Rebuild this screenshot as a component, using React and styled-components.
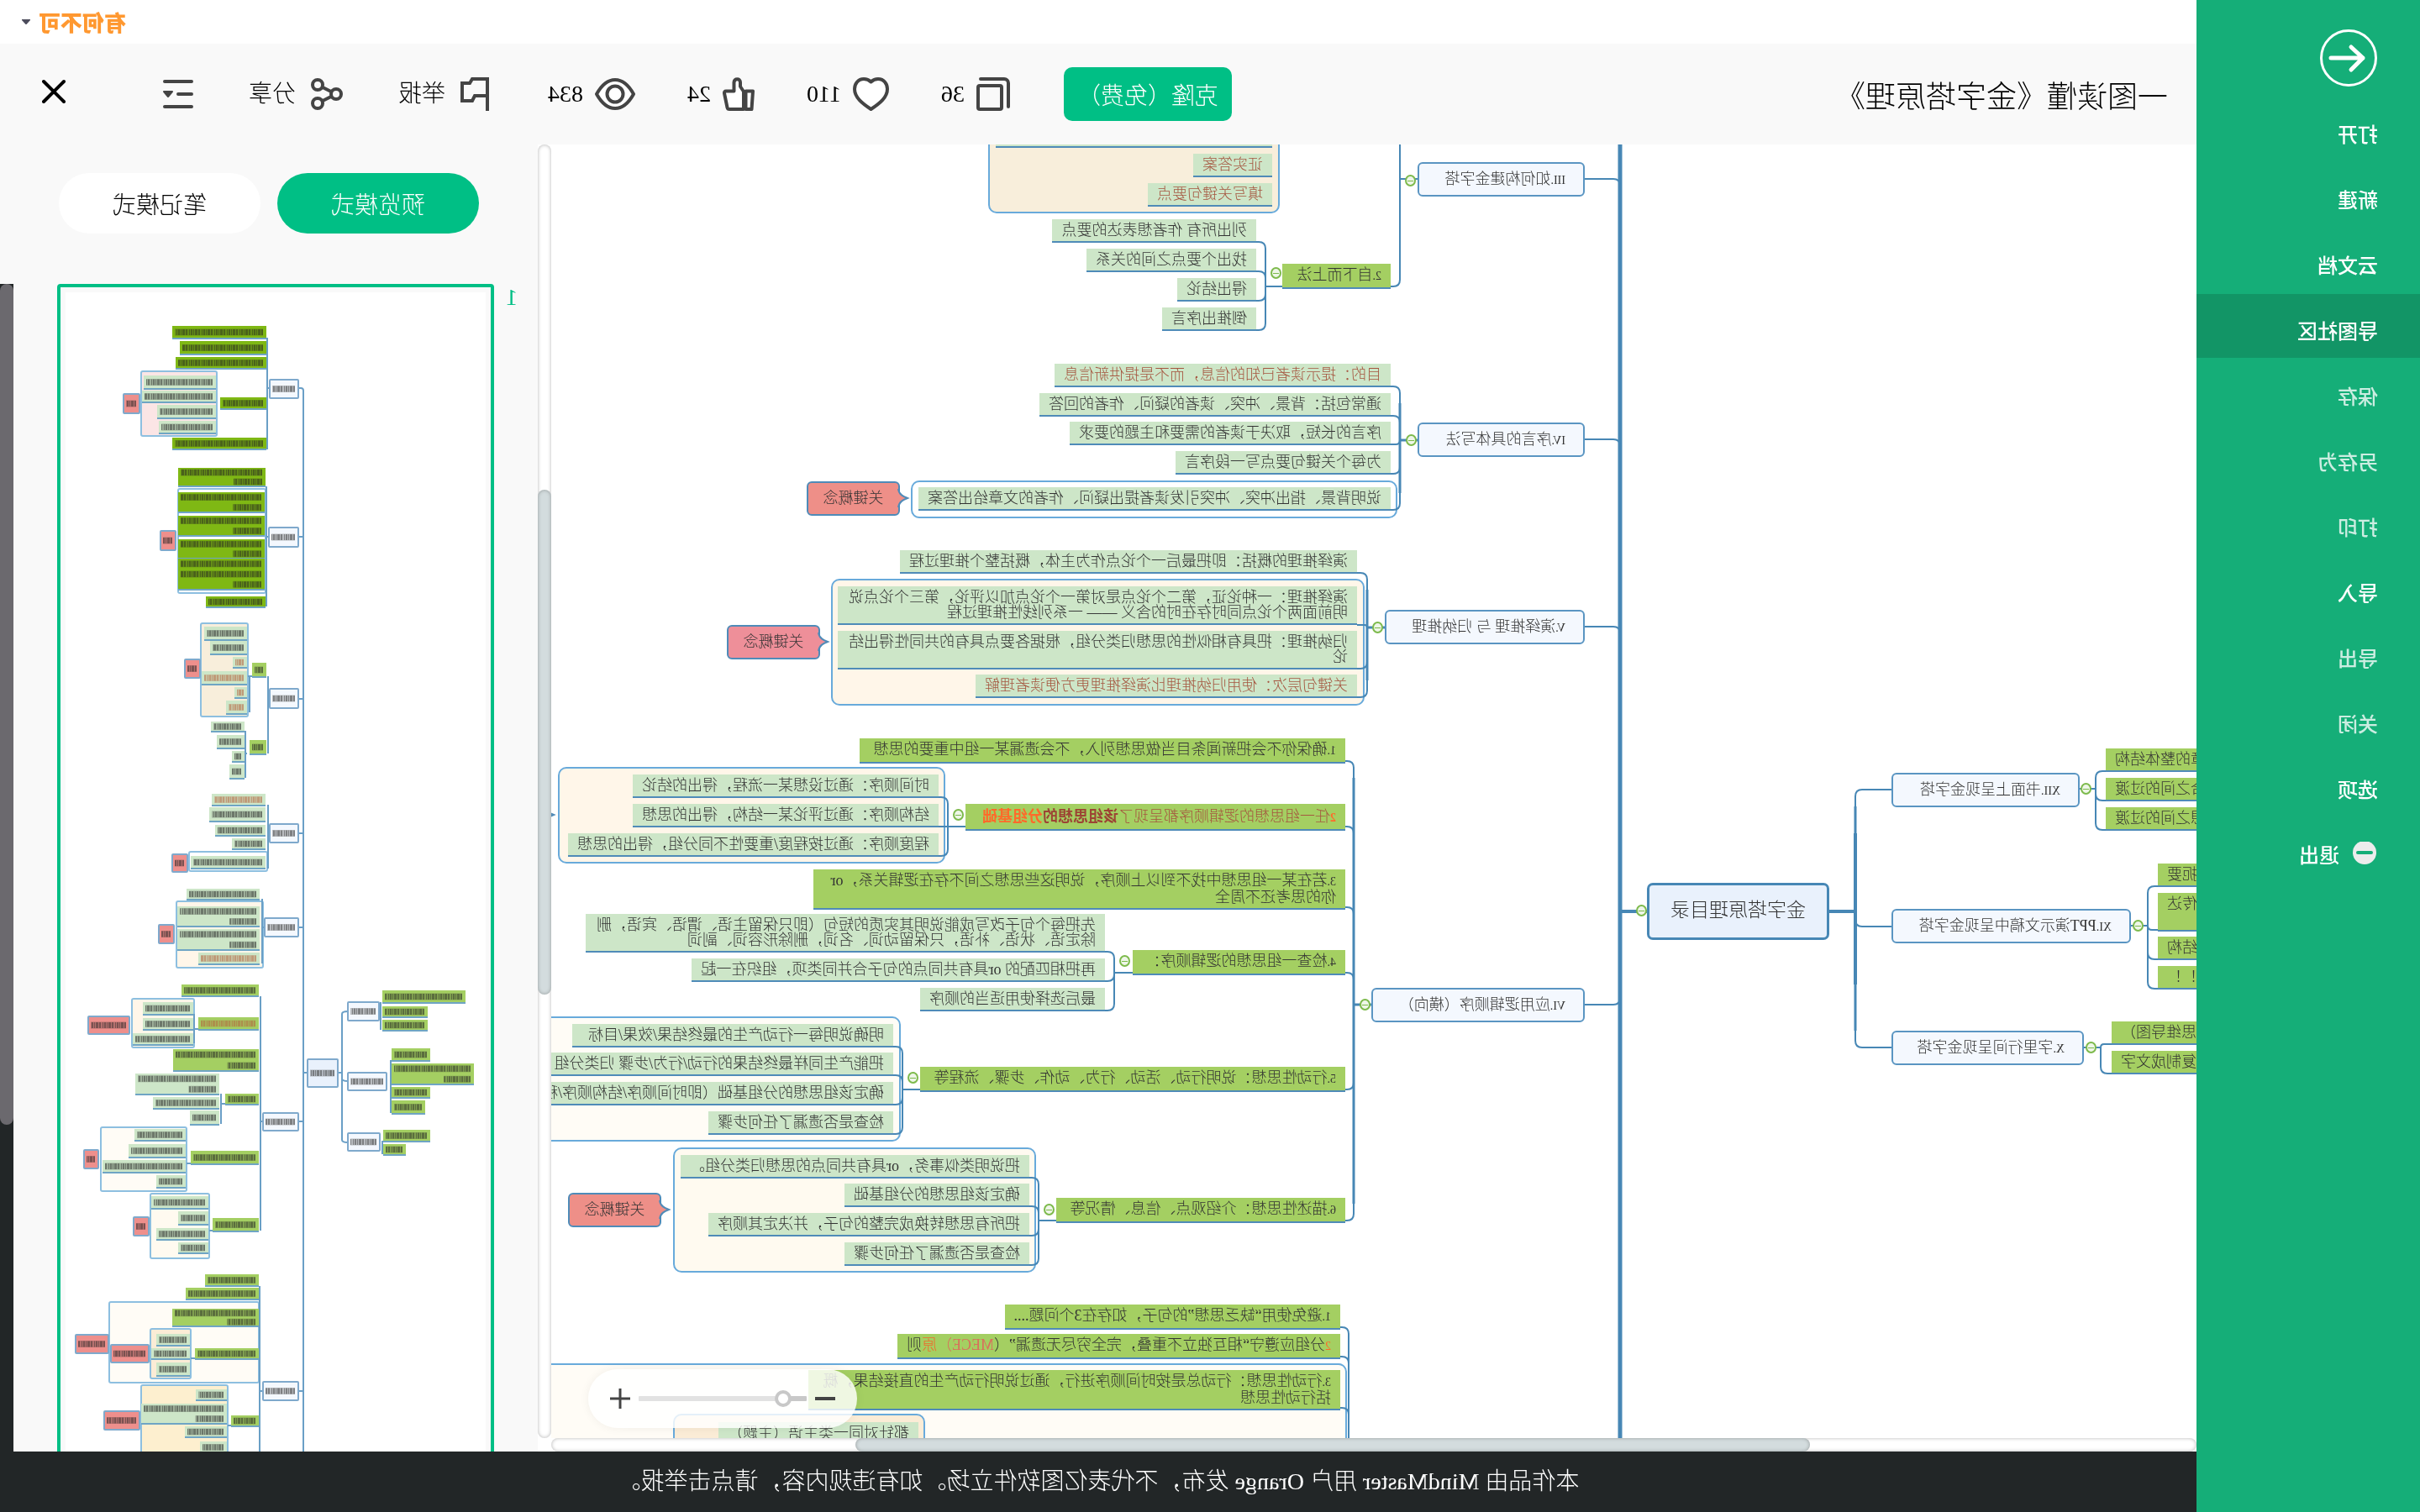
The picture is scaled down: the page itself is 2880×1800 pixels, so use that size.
import React, { useState } from 'react';
import styled, { createGlobalStyle } from 'styled-components';

const GlobalStyle = createGlobalStyle`
  * { box-sizing: border-box; }
  body {
    margin: 0;
    overflow: hidden;
    background: #fff;
    font-family: "Liberation Serif", "Noto Sans CJK SC Light", "Noto Sans CJK SC", serif;
    font-size: 28px;
    text-spacing-trim: space-all;
    color: #000;
  }
  button, input {
    font: inherit;
    color: inherit;
    margin: 0;
    padding: 0;
    border: 0;
    background: none;
  }
`;

/* the whole window is shown as its mirror image */
const Window = styled.div`
  display: flex;
  height: 100vh;
  transform: scaleX(-1);
`;

const Sidebar = styled.nav`
  flex: none;
  width: 266px;
  background: #15ae78;
  color: #fff;
  font-family: "Noto Sans CJK SC", sans-serif;
  font-size: 24px;
  font-weight: 500;
`;

const BackButton = styled.button`
  display: block;
  margin: 35px 0 13px 51px;
  height: 68px;
`;

const Menu = styled.div`
  display: flex;
  flex-direction: column;
  gap: 2px;
`;

const MenuItem = styled.a`
  display: flex;
  align-items: center;
  gap: 16px;
  height: 76px;
  padding: 9px 0 0 50px;
  color: ${props => (props.$dim ? 'rgba(255, 255, 255, .78)' : '#fff')};
  background: ${props => (props.$active ? '#129566' : 'none')};
  text-decoration: none;
  line-height: 36px;
`;

const Main = styled.main`
  flex: 1;
  min-width: 0;
  display: flex;
  flex-direction: column;
`;

const TopBar = styled.div`
  flex: none;
  display: flex;
  justify-content: flex-end;
  align-items: center;
  height: 52px;
  padding-right: 26px;
`;

const UserButton = styled.button`
  display: flex;
  align-items: center;
  gap: 10px;
  color: #ff9830;
  font-family: "Noto Sans CJK SC", sans-serif;
  font-size: 26px;
  font-weight: 900;
  line-height: 36px;
`;

const Header = styled.header`
  flex: none;
  display: flex;
  align-items: center;
  height: 120px;
  padding: 0 50px 0 34px;
  background: #f9f9f9;
`;

const Title = styled.h1`
  flex: 1;
  margin: 0;
  font-size: 36px;
  font-weight: 400;
  white-space: nowrap;
`;

const CloneButton = styled.button`
  width: 200px;
  height: 64px;
  margin-right: 64px;
  border-radius: 10px;
  background: #00bf85;
  color: #fff;
  white-space: nowrap;
`;

const Stats = styled.div`
  display: flex;
  align-items: center;
  gap: 62px;
  margin-right: 70px;
`;

const Actions = styled.div`
  display: flex;
  align-items: center;
  gap: 66px;
`;

const IconButton = styled.button`
  display: flex;
  align-items: center;
  gap: ${props => props.$gap || 14}px;
  margin-left: ${props => props.$push || 0}px;
  line-height: 40px;
`;

const Body = styled.div`
  flex: 1;
  min-height: 0;
  display: flex;
`;

const Viewer = styled.section`
  flex: 1;
  min-width: 0;
  display: grid;
  grid-template-columns: 1fr 16px;
  grid-template-rows: 1fr 16px;
`;

const Canvas = styled.div`
  position: relative;
  overflow: hidden;
  font-size: 18px;
  line-height: 18px;
  color: #333;
`;

const Links = styled.svg`
  position: absolute;
  left: 0;
  top: 0;
  fill: none;
  stroke: #4787b5;
`;

const Track = styled.div`
  display: flex;
  flex-direction: ${props => (props.$row ? 'row' : 'column')};
  background: #fff;
  border-radius: 8px;
  box-shadow: inset 0 0 4px rgba(0, 0, 0, .3);
`;

const Thumb = styled.div`
  flex: none;
  width: ${props => (props.$row ? '58%' : 'auto')};
  height: ${props => (props.$row ? 'auto' : '39%')};
  margin-left: ${props => (props.$row ? '23.5%' : '0')};
  border-radius: 8px;
  background: #d3dcde;
  box-shadow: inset 0 0 4px rgba(0, 0, 0, .3);
`;

const VThumbSpace = styled.div`
  flex: none;
  height: 26.7%;
`;

const Leaf = styled.div`
  position: absolute;
  left: ${props => props.$x}px;
  top: ${props => props.$y}px;
  width: ${props => (props.$w ? `${props.$w}px` : 'max-content')};
  min-height: 28px;
  padding: 4px 11px;
  border-bottom: 2px solid #4f8bb8;
  background: ${props => (props.$green ? '#a4cf62' : '#cde6c8')};
  color: ${props => (props.$red ? '#a5553f' : '#333')};
  text-align: ${props => (props.$end ? 'right' : 'left')};
`;

const Small = styled.span`
  font-size: 14px;
`;

const Mark = styled.span`
  color: ${props => props.$color};
  font-weight: ${props => (props.$bold ? 700 : 'inherit')};
`;

const Strong = styled(Mark)`
  font-family: "Noto Sans CJK SC", sans-serif;
  font-weight: 700;
`;

const Branch = styled.div`
  position: absolute;
  left: ${props => props.$x}px;
  top: ${props => props.$y}px;
  width: ${props => props.$w}px;
  height: 41px;
  padding: 9px 0 0 21px;
  border: 2px solid #5a95c2;
  border-radius: 6px;
  background: #f4f8fe;
  white-space: nowrap;
`;

const Root = styled.div`
  position: absolute;
  left: 437px;
  top: 879px;
  width: 217px;
  height: 68px;
  border: 3px solid #4787b5;
  border-radius: 7px;
  background: #e9f1fc;
  font-size: 23px;
  line-height: 60px;
  text-align: center;
`;

const Boundary = styled.div`
  position: absolute;
  left: ${props => props.$x}px;
  top: ${props => props.$y}px;
  width: ${props => props.$w}px;
  height: ${props => props.$h}px;
  border: 2px solid #68aadb;
  border-radius: 10px;
  background: ${props => props.$fill};
`;

const CalloutBox = styled.div`
  position: absolute;
  left: ${props => props.$x}px;
  top: ${props => props.$y}px;
  width: 111px;
  height: 41px;
  padding-top: 9px;
  border: 2px solid #4f8bb8;
  border-radius: 6px;
  background: ${props => props.$fill};
  text-align: center;

  svg {
    position: absolute;
    left: -14px;
    top: 6px;
  }
`;

const Toggle = styled.button`
  position: absolute;
  left: ${props => props.$x - 7}px;
  top: ${props => props.$y - 7}px;
  width: 13px;
  height: 14px;
  border: 2px solid #7dba4c;
  border-radius: 50%;
  background: linear-gradient(#7dba4c, #7dba4c) center / 7px 1px no-repeat #eef6e8;
`;

const ZoomBar = styled.div`
  position: absolute;
  right: 44px;
  bottom: 12px;
  display: flex;
  align-items: center;
  justify-content: center;
  gap: 10px;
  width: 320px;
  height: 70px;
  border-radius: 35px;
  background: rgba(255, 255, 255, .82);
  box-shadow: 0 0 12px rgba(0, 0, 0, .06);

  button {
    display: flex;
  }
`;

const Range = styled.input`
  appearance: none;
  width: 200px;
  height: 6px;
  border-radius: 1px;
  background: linear-gradient(to right, #c8c8c8 14%, #e2e2e2 14%);

  &::-webkit-slider-thumb {
    appearance: none;
    width: 20px;
    height: 20px;
    border: 4px solid #c8c8c8;
    border-radius: 50%;
    background: #fff;
  }
`;

const Panel = styled.aside`
  flex: none;
  display: flex;
  flex-direction: column;
  width: 640px;
  background: #f9f9f9;
`;

const Modes = styled.div`
  display: flex;
  gap: 20px;
  padding: 34px 70px 60px;
`;

const ModeButton = styled.button`
  flex: 1;
  height: 72px;
  border-radius: 36px;
  background: ${props => (props.$on ? '#00bf85' : '#fff')};
  color: ${props => (props.$on ? '#fff' : '#000')};
`;

const Pages = styled.div`
  flex: 1;
  min-height: 0;
  display: flex;
  overflow: hidden;
`;

const PageNumber = styled.div`
  width: 52px;
  padding-right: 14px;
  color: #00bf85;
  text-align: right;
`;

const PageFrame = styled.div`
  flex: 1;
  align-self: flex-start;
  padding: 6px;
  border: 4px solid #00bf85;
  border-radius: 4px;

  svg {
    display: block;
    width: 100%;
    background: #fff;
  }
`;

const PanelTrack = styled.div`
  width: 16px;
  margin-left: 52px;
  background: #222627;
`;

const PanelThumb = styled.div`
  height: 72%;
  border-radius: 8px;
  background: #6b696e;
`;

const Footer = styled.footer`
  flex: none;
  height: 72px;
  background: #222627;
  color: #fff;
  line-height: 72px;
  text-align: center;
  white-space: nowrap;
`;

const MENU = [
  { text: '打开' },
  { text: '新建' },
  { text: '云文档' },
  { text: '导图社区', active: true },
  { text: '保存', dim: true },
  { text: '另存为', dim: true },
  { text: '打印', dim: true },
  { text: '导入' },
  { text: '导出', dim: true },
  { text: '关闭', dim: true },
  { text: '选项' },
];

const BRANCHES = [
  { x: 728, y: 21, w: 199, no: 'III.', text: '如何构建金字塔' },
  { x: 728, y: 331, w: 199, no: 'IV.', text: '序言的具体写法' },
  { x: 728, y: 554, w: 238, no: 'V.', text: '演绎推理 与 归纳推理' },
  { x: 728, y: 1004, w: 254, no: 'VI.', text: '应用逻辑顺序（横向）' },
  { x: 139, y: 748, w: 224, no: 'XII.', text: '书面上呈现金字塔' },
  { x: 78, y: 910, w: 285, no: 'XI.', text: 'PPT演示文稿中呈现金字塔' },
  { x: 134, y: 1055, w: 229, no: 'X.', text: '字里行间呈现金字塔' },
];

const LEAVES = [
  { x: 1100, y: -24, w: 329, text: '' },
  { x: 1100, y: 11, text: '证实答案', red: true },
  { x: 1100, y: 46, text: '填写关键句要点', red: true },
  { x: 959, y: 142, w: 129, no: '2.', text: '自下而上法', green: true },
  { x: 1119, y: 89, text: '列出所有 作者想表达的要点' },
  { x: 1119, y: 124, text: '找出个要点之间的关系' },
  { x: 1119, y: 159, text: '得出结论' },
  { x: 1119, y: 194, text: '倒推出序言' },

  { x: 959, y: 261, text: '目的：提示读者已知的信息，而不是提供新信息', red: true },
  { x: 959, y: 296, text: '通常包括：背景、冲突、读者的疑问、作者的回答' },
  { x: 959, y: 330, text: '序言的长短，取决于读者的需要和主题的要求' },
  { x: 959, y: 365, text: '为每个关键句要点写一段序言' },
  { x: 959, y: 408, text: '说明背景、指出冲突、冲突引发读者提出疑问、作者的文章给出答案' },

  { x: 999, y: 483, text: '演绎推理的概括：即把最后一个论点作为主体，概括整个推理过程' },
  { x: 999, y: 526, w: 618, text: '演绎推理：一种论证，第二个论点是对第一个论点加以评论，第三个论点说明前面两个论点同时存在时的含义 —— 一系列线性推理过程' },
  { x: 999, y: 579, w: 618, text: '归纳推理：把具有相似性的思想归类分组，根据各要点具有的共同性得出结论' },
  { x: 999, y: 631, text: '关键句层次：使用归纳推理比演绎推理更方便读者理解', red: true },

  { x: 1013, y: 707, w: 578, no: '1.', text: '确保你不会把新闻条目当做思想列入，不会遗漏某一组中重要的思想', green: true },
  {
    x: 1013,
    y: 785,
    w: 452,
    green: true,
    red: true,
    text: (
      <>
        <Small><Mark $color="#ff6a2a" $bold>2</Mark></Small>
        任一组思想的逻辑顺序都呈现了
        <Strong $color="#9c4434">该组思想的</Strong>
        <Strong $color="#ff6a2a">分组基础</Strong>
      </>
    ),
  },
  { x: 1497, y: 750, text: '时间顺序：通过设想某一流程，得出的结论' },
  { x: 1497, y: 785, text: '结构顺序：通过评论某一结构，得出的思想' },
  { x: 1497, y: 820, text: '程度顺序：通过按程度/重要性不同分组，得出的思想' },
  { x: 1013, y: 863, w: 633, no: '3.', text: '若在某一组思想中找不到以上顺序，说明这些思想之间不存在逻辑关系，or 你的思考还不周全', green: true },
  { x: 1013, y: 959, w: 253, no: '4.', text: '检查一组思想的逻辑顺序：', green: true },
  { x: 1299, y: 916, w: 618, text: '先把每个句子改写成能说明其实质的短句（即只保留主语、谓语、宾语，删除定语、状语、补语，只保留动词、名词，删除形容词、副词' },
  { x: 1299, y: 969, text: '再把相匹配的 or具有共同点的句子合并同类项，组织在一起' },
  { x: 1299, y: 1004, text: '最后选择使用适当的顺序' },
  { x: 1013, y: 1098, w: 506, no: '5.', text: '行动性思想：说明行动、活动、行为、动作、步骤、流程等', green: true },
  { x: 1551, y: 1047, w: 382, text: '明确说明每一行动产生的最终结果/效果/目标' },
  { x: 1551, y: 1081, text: '把能产生同样最终结果的行动/行为/步骤 归类分组' },
  { x: 1551, y: 1116, text: '确定该组思想的分组基础（即时间顺序/结构顺序/程度顺序）' },
  { x: 1551, y: 1151, text: '检查是否遗漏了任何步骤' },
  { x: 1013, y: 1254, w: 344, no: '6.', text: '描述性思想：介绍观点、信息、情况等', green: true },
  { x: 1389, y: 1203, text: '把说明类似事务，or具有共同点的思想归类分组。' },
  { x: 1389, y: 1237, text: '确定该组思想的分组基础' },
  { x: 1389, y: 1272, text: '把所有思想转换成完整的句子，并决定其顺序' },
  { x: 1389, y: 1307, text: '检查是否遗漏了任何步骤' },

  { x: 1019, y: 1381, no: '1.', text: '避免使用“缺乏思想”的句子，如存在3个问题....', green: true },
  {
    x: 1019,
    y: 1416,
    green: true,
    text: (
      <>
        <Small><Mark $color="#ff6a2a">2</Mark></Small>
        分组应遵守“相互独立不重叠，完全穷尽无遗漏”（
        <Mark $color="#d9705c">MECE）</Mark>
        <Mark $color="#f0682c">原</Mark>
        则
      </>
    ),
  },
  { x: 1019, y: 1459, w: 633, no: '3.', text: '行动性思想：行动总是按时间顺序进行，通过说明行动产生的直接结果，概括行动性思想', green: true },
  { x: 1521, y: 1521, text: '都针对同一类主语（主题）' },

  { x: -78, y: 719, w: 186, end: true, green: true, text: '呈现文章的整体结构' },
  { x: -78, y: 754, w: 186, end: true, green: true, text: '各个组合之间的过渡' },
  { x: -78, y: 789, w: 186, end: true, green: true, text: '各组思想之间的过渡' },
  { x: -78, y: 856, w: 124, end: true, green: true, text: '简明扼要' },
  { x: -78, y: 891, w: 124, end: true, green: true, text: <>只供传达<br />&nbsp;</> },
  { x: -78, y: 943, w: 124, end: true, green: true, text: '金字塔结构' },
  { x: -78, y: 978, w: 124, end: true, green: true, text: '练习！！' },
  { x: -78, y: 1044, w: 179, end: true, green: true, text: '（思维导图）' },
  { x: -78, y: 1079, w: 179, end: true, green: true, text: '然后复制成文字' },
];

const BOUNDARIES = [
  { x: 1091, y: -120, w: 347, h: 202, fill: '#f8eedb' },
  { x: 951, y: 400, w: 579, h: 45, fill: '#fff' },
  { x: 990, y: 517, w: 635, h: 151, fill: '#fff6e9' },
  { x: 1489, y: 741, w: 461, h: 115, fill: '#fff6e9' },
  { x: 1542, y: 1038, w: 600, h: 149, fill: '#fffcf6' },
  { x: 1381, y: 1194, w: 432, h: 149, fill: '#fffaf0' },
  { x: 1011, y: 1451, w: 1100, h: 300, fill: '#fffcf6' },
  { x: 1513, y: 1511, w: 300, h: 150, fill: '#fbecd6' },
];

const CALLOUTS = [
  { x: 1543, y: 401, fill: '#ee8f88' },
  { x: 1638, y: 572, fill: '#ee8f99' },
  { x: 1964, y: 778, fill: '#ee8f99' },
  { x: 1827, y: 1248, fill: '#ee8f88' },
];

const TOGGLES = [
  [936, 43], [1096, 153], [935, 352], [975, 575], [990, 1024], [1474, 798], [1276, 972],
  [1528, 1111], [1366, 1268], [661, 912], [132, 767], [70, 930], [126, 1075],
];

// x: vertical line, from: where the parent joins it, ys: the children
const LINKS = [
  { x: 686, from: 912, to: 728, ys: [41, 351, 574, 1024], w: 2 },
  { x: 406, from: 913, to: 363, ys: [768, 931, 1075], w: 3 },
  { x: 120, from: 767, to: 108, ys: [746, 781, 816], start: 139 },
  { x: 58, from: 930, to: 46, ys: [883, 935, 970, 1005], start: 78 },
  { x: 114, from: 1075, to: 101, ys: [1071, 1106], start: 134 },
  { x: 948, from: 41, to: 959, ys: [-40, 169], start: 927 },
  { x: 1108, from: 169, to: 1119, ys: [116, 151, 186, 221], start: 1088 },
  { x: 948, from: 352, to: 959, ys: [288, 323, 357, 392, 435], start: 927, w: 3 },
  { x: 987, from: 575, to: 999, ys: [510, 572, 624, 658], start: 966, w: 3 },
  { x: 1003, from: 1024, to: 1013, ys: [734, 812, 908, 986, 1125, 1281], start: 982, w: 3 },
  { x: 1486, from: 812, to: 1497, ys: [777, 812, 847], start: 1465 },
  { x: 1288, from: 986, to: 1299, ys: [961, 996, 1031], start: 1266 },
  { x: 1540, from: 1125, to: 1551, ys: [1074, 1108, 1143, 1178], start: 1519 },
  { x: 1378, from: 1281, to: 1389, ys: [1230, 1264, 1299, 1334], start: 1357 },
  { x: 1009, from: 1600, to: 1019, ys: [1408, 1443, 1504] },
];

const elbow = (x, from, y, to) => {
  const r = Math.min(8, Math.abs(y - from));
  const down = y > from ? 1 : -1;
  const side = to > x ? 1 : -1;
  return `M${x} ${from}V${y - (down * r)}Q${x} ${y} ${x + (side * r)} ${y}H${to}`;
};

/* page preview: kind, x, y, width, height, lines of text */
const PREVIEW = [
  ['o', 320, 94, 90, 77, '#fbe5e5'],
  ['o', 262, 234, 104, 124, '#fff'],
  ['o', 283, 394, 56, 111, '#f8eedb'],
  ['o', 260, 666, 93, 23, '#fff'],
  ['o', 265, 725, 103, 79, '#fff6e9'],
  ['o', 347, 841, 74, 58, '#fff6e9'],
  ['o', 356, 994, 102, 76, '#fffcf6'],
  ['o', 329, 1073, 70, 77, '#fffaf0'],
  ['o', 270, 1202, 178, 96, '#fffcf6'],
  ['o', 351, 1234, 48, 59, '#fbecd6'],
  ['o', 307, 1301, 103, 100, '#fdefcf'],
  ['d', 261, 40, 112, 15], ['d', 261, 58, 103, 16], ['d', 261, 77, 108, 14],
  ['d', 261, 125, 55, 14], ['d', 261, 173, 112, 14],
  ['p', 321, 99, 86, 16], ['p', 321, 117, 88, 14], ['p', 321, 134, 70, 16], ['p', 321, 153, 68, 15],
  ['d', 262, 209, 104, 22, 2], ['d', 263, 238, 103, 24, 2], ['d', 263, 266, 103, 24, 2],
  ['d', 263, 294, 103, 23, 2], ['d', 263, 317, 103, 37, 3], ['d', 262, 362, 71, 13],
  ['g', 261, 441, 17, 17], ['g', 261, 533, 20, 17],
  ['p', 284, 398, 51, 16], ['p', 284, 415, 44, 16], ['r', 284, 434, 17, 13],
  ['r', 284, 451, 54, 16], ['r', 284, 470, 15, 13], ['r', 284, 486, 25, 16],
  ['p', 287, 511, 40, 12], ['p', 287, 527, 33, 16], ['p', 287, 546, 15, 13], ['p', 287, 562, 18, 17],
  ['r', 262, 597, 64, 14], ['p', 262, 613, 67, 17], ['p', 262, 634, 60, 13],
  ['p', 262, 650, 40, 13], ['p', 262, 671, 89, 15],
  ['p', 269, 710, 87, 13], ['p', 269, 731, 98, 24, 2], ['p', 269, 758, 98, 25, 2], ['r', 269, 786, 73, 14],
  ['g', 270, 824, 92, 14], ['gr', 270, 863, 72, 15], ['g', 270, 901, 102, 26, 2],
  ['g', 270, 954, 40, 13], ['g', 270, 1022, 81, 16], ['g', 270, 1102, 55, 16],
  ['p', 348, 845, 60, 15], ['p', 348, 864, 60, 14], ['p', 348, 882, 72, 14],
  ['p', 317, 930, 100, 25, 2], ['p', 317, 958, 79, 14], ['p', 317, 974, 35, 17],
  ['p', 357, 996, 61, 14], ['p', 357, 1014, 68, 16], ['p', 357, 1033, 99, 15], ['p', 357, 1051, 35, 15],
  ['p', 330, 1076, 68, 15], ['p', 330, 1094, 36, 16], ['p', 330, 1114, 62, 14], ['p', 330, 1131, 36, 13],
  ['g', 270, 1169, 64, 14], ['g', 270, 1185, 87, 14], ['g', 270, 1210, 103, 21, 2], ['g', 270, 1257, 76, 13],
  ['p', 352, 1240, 40, 14], ['p', 352, 1257, 46, 13], ['p', 352, 1274, 40, 16],
  ['g', 270, 1337, 33, 13],
  ['p', 308, 1306, 37, 13], ['p', 308, 1323, 102, 24, 2], ['p', 308, 1350, 50, 13], ['p', 308, 1368, 32, 14],
  ['g', 24, 831, 99, 15], ['g', 69, 850, 54, 13], ['g', 69, 866, 54, 13],
  ['g', 66, 900, 46, 15], ['g', 14, 918, 98, 25, 2], ['g', 66, 946, 46, 13], ['g', 72, 962, 40, 16],
  ['g', 66, 997, 56, 14], ['g', 95, 1014, 27, 13],
  ['c', 412, 121, 19, 23], ['c', 369, 284, 18, 23], ['c', 340, 437, 18, 22], ['c', 355, 669, 18, 21],
  ['c', 371, 753, 18, 22], ['c', 424, 862, 49, 21], ['c', 461, 1021, 17, 22], ['c', 401, 1101, 18, 22],
  ['c', 401, 1253, 45, 21], ['c', 449, 1241, 39, 22], ['c', 412, 1332, 42, 22],
  ['b', 223, 104, 34, 22], ['b', 223, 280, 35, 23], ['b', 223, 472, 34, 23], ['b', 223, 633, 34, 22],
  ['b', 223, 745, 40, 22], ['b', 223, 977, 42, 21], ['b', 223, 1297, 42, 22],
  ['b', 127, 845, 37, 22], ['b', 118, 929, 46, 21], ['b', 126, 1001, 38, 21],
  ['t', 176, 913, 36, 33],
];

const PREVIEW_FILL = {
  d: '#7fb814', g: '#a4cf62', gr: '#a4cf62', p: '#cde6c8', r: '#cde6c8', c: '#ee8f8c', b: '#f4f8fe', t: '#e9f1fc',
};

const PREVIEW_LINKS = [
  'M223 114H220Q217 114 217 117V1390M217 291H223M217 484H223M217 644H223M217 756H223M217 987H223M217 1308H223',
  'M260 54V187M257 114H260M261 231V374M258 291H261M259 457V549M257 484H259M281 457V500M284 549H286V578M286 549V522',
  'M259 610V686M257 644H259M266 722V799M263 756H266M268 838V1117M265 987H268M342 877H347V894M347 877V859',
  'M310 966H315V990M315 966V954M351 1037H356M325 1117H329M269 1183V1390M265 1308H269M346 1269H351M303 1349H307',
  'M176 929H171M171 929V859Q171 856 164 856M171 929V936Q171 939 164 939M171 929V1009Q171 1012 164 1012',
  'M125 845V878M113 914V977M123 1010V1026M212 929H217M278 457H283',
];

function PreviewBox({ box }) {
  const [kind, x, y, w, h, extra] = box;
  if (kind === 'o') {
    return <rect x={x} y={y} width={w} height={h} rx="2" fill={extra} stroke="#8dbfe0" strokeWidth="2" />;
  }
  const lines = extra || 1;
  const framed = kind === 'c' || kind === 'b' || kind === 't';
  const ink = kind === 'r' || kind === 'gr' ? '#b5603c' : '#222';
  return (
    <g>
      <rect
        x={x}
        y={y}
        width={w}
        height={h}
        fill={PREVIEW_FILL[kind]}
        stroke={framed ? '#7fa9cc' : 'none'}
        strokeWidth="2"
        rx={framed ? 1 : 0}
      />
      {!framed && <path d={`M${x} ${y + h}h${w}`} stroke="#6fa5c4" strokeWidth="2" />}
      {Array.from({ length: lines }, (_, i) => {
        const last = i > 0 && i === lines - 1;
        const ty = y + (h * (i + 0.5)) / lines;
        const tw = (w - 7) * (last ? 0.35 : 1);
        return (
          <g key={i} stroke={ink}>
            <path d={`M${x + 4} ${ty}h${tw}`} strokeOpacity=".28" strokeWidth="8" />
            <path
              d={`M${x + 4} ${ty}h${tw}`}
              strokeOpacity=".4"
              strokeWidth="7"
              strokeDasharray="2 1 3 1 1 1 2 1 1 2"
            />
          </g>
        );
      })}
    </g>
  );
}

const Preview = () => (
  <svg viewBox="0 0 500 1380" fill="none">
    {PREVIEW.filter(box => box[0] === 'o').map(box => <PreviewBox key={box.join()} box={box} />)}
    <g stroke="#6a9fc6" strokeWidth="2">
      {PREVIEW_LINKS.map(d => <path key={d} d={d} />)}
    </g>
    {PREVIEW.filter(box => box[0] !== 'o').map(box => <PreviewBox key={box.join()} box={box} />)}
  </svg>
);

const Icon = ({ w, h, children, stroke = '#444', width = 4 }) => (
  <svg
    width={w}
    height={h}
    viewBox={`0 0 ${w} ${h}`}
    fill="none"
    stroke={stroke}
    strokeWidth={width}
    strokeLinecap="round"
    strokeLinejoin="round"
    aria-hidden="true"
  >
    {children}
  </svg>
);

const STATS = [
  {
    label: '克隆数',
    value: 36,
    icon: (
      <Icon w={40} h={40}>
        <path d="M2 35V7a5 5 0 0 1 5-5h28" />
        <rect x="10" y="10" width="28" height="28" rx="2" />
      </Icon>
    ),
  },
  {
    label: '收藏',
    value: 110,
    icon: (
      <Icon w={43} h={40}>
        <path fill="#fff" d="M21.500 5.500C18 2 15 2 13 2 6 2 2 8 2 14c0 10 9 17 19.500 24C32 31 41 24 41 14 41 8 37 2 30 2c-2 0-5 0-8.500 3.500z" />
      </Icon>
    ),
  },
  {
    label: '点赞',
    value: 24,
    icon: (
      <Icon w={38} h={40}>
        <path fill="#fff" d="M2 16.500h8.500V38H3.500z" />
        <path fill="#fff" d="M13 38V17l4-6V6c0-5 7-5 7.500 0V16.500H34c1.500 0 2.200 1 2 2.500l-3.500 17c-.3 1.300-1 2-2.500 2z" />
      </Icon>
    ),
  },
  {
    label: '浏览',
    value: 834,
    icon: (
      <Icon w={48} h={38}>
        <path fill="#fff" d="M2 19C7 10 14 2 24 2s17 8 22 17c-5 9-12 17-22 17S7 28 2 19z" />
        <circle cx="24" cy="19" r="9.500" />
      </Icon>
    ),
  },
];

const Callout = ({ x, y, fill }) => (
  <CalloutBox $x={x} $y={y} $fill={fill}>
    <svg width="16" height="24" viewBox="0 0 16 24">
      <path d="M14 1c-1 7-6 9-11 11 5 2 10 4 11 11" fill={fill} stroke="#4f8bb8" strokeWidth="2" />
    </svg>
    关键概念
  </CalloutBox>
);

function MindMap() {
  const [zoom, setZoom] = useState(10);

  return (
    <Canvas>
      {BOUNDARIES.map(({ x, y, w, h, fill }) => (
        <Boundary key={`${x}-${y}`} $x={x} $y={y} $w={w} $h={h} $fill={fill} />
      ))}
      <Links width="1958" height="1540">
        <path d="M686 0V1540" strokeWidth="5" />
        <path d="M437 913H406M654 913H686" strokeWidth="4" />
        <path d="M406 820V1000" strokeWidth="4" />
        {LINKS.map(link => (
          <g key={`${link.x}-${link.from}`} strokeWidth={link.w || 2}>
            {link.start && <path d={`M${link.start} ${link.from}H${link.x}`} />}
            {link.ys.map(y => <path key={y} d={elbow(link.x, link.from, y, link.to)} strokeWidth="2" />)}
            {link.w === 3 && (
              <path d={`M${link.x} ${link.ys[0] + 20}V${link.ys[link.ys.length - 1] - 20}`} />
            )}
          </g>
        ))}
      </Links>
      {LEAVES.map(leaf => (
        <Leaf
          key={`${leaf.x}-${leaf.y}`}
          $x={leaf.x}
          $y={leaf.y}
          $w={leaf.w}
          $green={leaf.green}
          $red={leaf.red}
          $end={leaf.end}
        >
          {leaf.no && <Small>{leaf.no}</Small>}
          {leaf.text}
        </Leaf>
      ))}
      {BRANCHES.map(({ x, y, w, no, text }) => (
        <Branch key={no} $x={x} $y={y} $w={w}>
          <Small>{no}</Small>{text}
        </Branch>
      ))}
      <Root>金字塔原理目录</Root>
      {CALLOUTS.map(callout => <Callout key={callout.y} {...callout} />)}
      {TOGGLES.map(([x, y]) => <Toggle key={`${x}-${y}`} $x={x} $y={y} aria-label="收起" />)}
      <ZoomBar>
        <button aria-label="缩小" onClick={() => setZoom(Math.max(0, zoom - 5))}>
          <Icon w={24} h={24} width={4}><path strokeLinecap="butt" d="M0 12h24" /></Icon>
        </button>
        <Range
          type="range"
          min="0"
          max="100"
          value={zoom}
          aria-label="缩放"
          onChange={e => setZoom(Number(e.target.value))}
        />
        <button aria-label="放大" onClick={() => setZoom(Math.min(100, zoom + 5))}>
          <Icon w={24} h={24} width={3}><path strokeLinecap="butt" d="M0 12h24M12 0v24" /></Icon>
        </button>
      </ZoomBar>
    </Canvas>
  );
}

const App = () => (
  <Window>
    <GlobalStyle />
    <Sidebar>
      <BackButton aria-label="返回">
        <Icon w={68} h={68} stroke="#fff" width={3}>
          <circle cx="34" cy="34" r="32.500" />
          <path strokeWidth="5" d="M55 34H17M31 21L17 34l14 14" />
        </Icon>
      </BackButton>
      <Menu>
        {MENU.map(({ text, active, dim }) => (
          <MenuItem key={text} href="#" $active={active} $dim={dim}>{text}</MenuItem>
        ))}
        <MenuItem href="#">
          <Icon w={30} h={30} stroke="#15ae78">
            <circle cx="16" cy="13" r="14" fill="#ececec" stroke="none" />
            <path d="M8 13h16" />
          </Icon>
          退出
        </MenuItem>
      </Menu>
    </Sidebar>
    <Main>
      <TopBar>
        <UserButton>
          有何不可
          <svg width="10" height="6" viewBox="0 0 10 6" aria-hidden="true">
            <path d="M0 0h10v1L5.500 6h-1L0 1z" fill="#4c4c5c" />
          </svg>
        </UserButton>
      </TopBar>
      <Header>
        <Title>一图读懂《金字塔原理》</Title>
        <CloneButton>克隆（免费）</CloneButton>
        <Stats>
          {STATS.map(({ label, value, icon }) => (
            <IconButton key={label} title={label}>{icon}{value}</IconButton>
          ))}
        </Stats>
        <Actions>
          <IconButton $gap={18}>
            <Icon w={34} h={40}>
              <path strokeLinecap="butt" strokeLinejoin="miter" d="M2 40V2h18l3 5h9v21H20l-3-6H2" />
            </Icon>
            举报
          </IconButton>
          <IconButton $gap={18}>
            <Icon w={38} h={38}>
              <circle cx="8" cy="19" r="6" />
              <circle cx="30" cy="8" r="6" />
              <circle cx="30" cy="30" r="6" />
              <path d="M14 16l10-5M14 22l10 5" />
            </Icon>
            分享
          </IconButton>
          <IconButton aria-label="目录">
            <Icon w={36} h={36}>
              <path d="M2 3h32M2 18h16M2 33h32" />
              <path d="M25 15h10l-5 6z" fill="#444" strokeWidth="2" />
            </Icon>
          </IconButton>
          <IconButton aria-label="关闭" $push={50}>
            <Icon w={28} h={36} stroke="#000"><path d="M2 3l24 24M26 3L2 27" /></Icon>
          </IconButton>
        </Actions>
      </Header>
      <Body>
        <Viewer>
          <MindMap />
          <Track>
            <VThumbSpace />
            <Thumb />
          </Track>
          <Track $row>
            <Thumb $row />
          </Track>
        </Viewer>
        <Panel>
          <Modes>
            <ModeButton $on>预览模式</ModeButton>
            <ModeButton>笔记模式</ModeButton>
          </Modes>
          <Pages>
            <PageNumber>1</PageNumber>
            <PageFrame><Preview /></PageFrame>
            <PanelTrack><PanelThumb /></PanelTrack>
          </Pages>
        </Panel>
      </Body>
      <Footer>本作品由 MindMaster 用户 Orange 发布，不代表亿图软件立场。如有违规内容，请点击举报。</Footer>
    </Main>
  </Window>
);

export default App;
